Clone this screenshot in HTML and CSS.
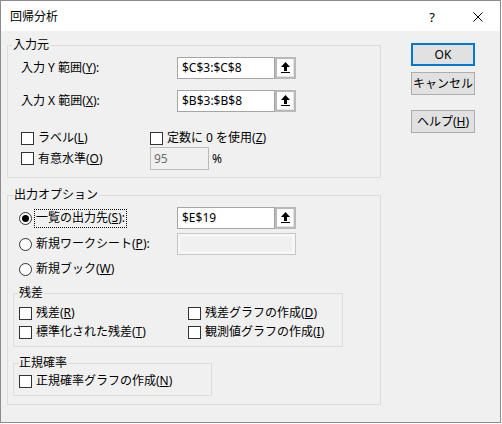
FILE: index.html
```html
<!DOCTYPE html>
<html lang="ja">
<head>
<meta charset="utf-8">
<title>回帰分析</title>
<link rel="stylesheet" href="styles.css">
</head>
<body>
<div class="window">
  <div class="titlebar">
    <span class="title">回帰分析</span>
    <span class="cap cap-help">?</span>
    <span class="cap cap-close"><svg width="10" height="10" viewBox="0 0 10 10"><path d="M0.5 0.5 L9.5 9.5 M9.5 0.5 L0.5 9.5" stroke="#000" stroke-width="1" fill="none"/></svg></span>
  </div>
  <div class="content">
    <div class="main">
      <fieldset class="grp grp-in">
        <legend>入力元</legend>
        <div class="range-row">
          <span class="lbl">入力 Y 範囲(<u>Y</u>):</span>
          <div class="refedit"><span class="ref-text">$C$3:$C$8</span><span class="ref-btn"><svg width="9" height="11" viewBox="0 0 9 11"><path d="M4.5 0 L9 5 L6 5 L6 9 L3 9 L3 5 L0 5 Z" fill="#000"/><rect x="0" y="10" width="9" height="1" fill="#000"/></svg></span></div>
        </div>
        <div class="range-row row-next">
          <span class="lbl">入力 X 範囲(<u>X</u>):</span>
          <div class="refedit"><span class="ref-text">$B$3:$B$8</span><span class="ref-btn"><svg width="9" height="11" viewBox="0 0 9 11"><path d="M4.5 0 L9 5 L6 5 L6 9 L3 9 L3 5 L0 5 Z" fill="#000"/><rect x="0" y="10" width="9" height="1" fill="#000"/></svg></span></div>
        </div>
        <div class="opt-grid">
          <label class="chk"><span class="cb"></span>ラベル(<u>L</u>)</label>
          <label class="chk"><span class="cb"></span>定数に 0 を使用(<u>Z</u>)</label>
          <label class="chk"><span class="cb"></span>有意水準(<u>O</u>)</label>
          <div class="conf"><span class="conf-field">95</span><span class="pct">%</span></div>
        </div>
      </fieldset>

      <fieldset class="grp grp-out">
        <legend>出力オプション</legend>
        <div class="radio-row">
          <label class="rad"><span class="rb"><span class="dot"></span></span><span class="focus">一覧の出力先(<u>S</u>):</span></label>
          <div class="refedit"><span class="ref-text">$E$19</span><span class="ref-btn"><svg width="9" height="11" viewBox="0 0 9 11"><path d="M4.5 0 L9 5 L6 5 L6 9 L3 9 L3 5 L0 5 Z" fill="#000"/><rect x="0" y="10" width="9" height="1" fill="#000"/></svg></span></div>
        </div>
        <div class="radio-row row-gap">
          <label class="rad"><span class="rb"></span>新規ワークシート(<u>P</u>):</label>
          <span class="dis-field"></span>
        </div>
        <div class="radio-row row-gap row-last">
          <label class="rad"><span class="rb"></span>新規ブック(<u>W</u>)</label>
        </div>

        <fieldset class="sub sub-resid">
          <legend>残差</legend>
          <div class="resid-grid">
            <label class="chk"><span class="cb"></span>残差(<u>R</u>)</label>
            <label class="chk"><span class="cb"></span>残差グラフの作成(<u>D</u>)</label>
            <label class="chk"><span class="cb"></span>標準化された残差(<u>T</u>)</label>
            <label class="chk"><span class="cb"></span>観測値グラフの作成(<u>I</u>)</label>
          </div>
        </fieldset>

        <fieldset class="sub sub-norm">
          <legend>正規確率</legend>
          <label class="chk norm-row"><span class="cb"></span>正規確率グラフの作成(<u>N</u>)</label>
        </fieldset>
      </fieldset>
    </div>

    <div class="buttons">
      <span class="btn btn-default">OK</span>
      <span class="btn btn-cancel">キャンセル</span>
      <span class="btn btn-help">ヘルプ(<u>H</u>)</span>
    </div>
  </div>
</div>
</body>
</html>
```

FILE: styles.css
```css
* {
  box-sizing: border-box;
}

html, body {
  margin: 0;
  padding: 0;
  background: #ffffff;
}

body {
  font-family: "Noto Sans", "Noto Sans CJK JP", sans-serif;
  font-size: 12px;
  color: #000;
}

.window {
  width: 501px;
  height: 423px;
  border: 1px solid #8c8c8c;
  background: #f0f0f0;
  display: flex;
  flex-direction: column;
}

.titlebar {
  height: 30px;
  background: #ffffff;
  display: flex;
  align-items: center;
  padding-left: 9px;
  padding-top: 1px;
}

.title {
  flex: 1;
  line-height: 16px;
}

.cap {
  display: flex;
  align-items: center;
  justify-content: center;
  height: 29px;
}

.cap-help {
  width: 46px;
  font-size: 13px;
}

.cap-close {
  width: 45px;
}

.cap-close svg {
  display: block;
}

.content {
  flex: 1;
  display: flex;
  padding: 6px 0 0 6px;
}

.main {
  width: 374px;
  display: flex;
  flex-direction: column;
}

fieldset {
  margin: 0;
  min-width: 0;
  border: 1px solid #dcdcdc;
}

legend {
  padding: 0 1px;
  line-height: 16px;
}

.grp-in {
  padding: 0 0 7px 4px;
}

.grp-out {
  margin-top: 9px;
  padding: 0 0 8px 5px;
}

.lbl, .chk, .rad {
  line-height: 16px;
  white-space: nowrap;
}

.range-row {
  display: grid;
  grid-template-columns: 156px 119px;
  align-items: center;
  margin-top: 4px;
  margin-left: 9px;
  height: 22px;
}

.range-row.row-next {
  margin-top: 11px;
}

.refedit {
  display: flex;
  height: 22px;
}

.ref-text {
  width: 98px;
  height: 22px;
  border: 1px solid #a5a5a5;
  background: #ffffff;
  padding-left: 4px;
  line-height: 20px;
}

.ref-btn {
  width: 21px;
  height: 22px;
  border: 2px solid #b9b9b9;
  background: #fdfdfd;
  box-shadow: inset -1px -1px 0 #e3e3e3;
  display: flex;
  align-items: center;
  justify-content: center;
  padding-bottom: 2px;
}

.ref-btn svg {
  display: block;
}

.opt-grid {
  display: grid;
  grid-template-columns: 129px auto;
  grid-template-rows: 16px 23px;
  row-gap: 1px;
  align-items: center;
  margin-top: 18px;
  margin-left: 9px;
}

.chk, .rad {
  display: flex;
  align-items: center;
}

.cb {
  width: 13px;
  height: 13px;
  border: 1px solid #333333;
  background: #ffffff;
  margin-right: 4px;
  flex: none;
}

.rb {
  width: 13px;
  height: 13px;
  border: 1px solid #333333;
  border-radius: 50%;
  background: #ffffff;
  margin-right: 4px;
  flex: none;
  display: flex;
  align-items: center;
  justify-content: center;
}

.dot {
  width: 7px;
  height: 7px;
  border-radius: 50%;
  background: #000;
}

.conf {
  display: flex;
  align-items: center;
}

.conf-field {
  width: 59px;
  height: 23px;
  border: 1px solid #bcbcbc;
  background: #f0f0f0;
  color: #6d6d6d;
  padding-left: 3px;
  line-height: 21px;
}

.pct {
  margin-left: 3px;
  line-height: 16px;
}

.radio-row {
  display: grid;
  grid-template-columns: 158px 119px;
  align-items: center;
  margin-top: 4px;
  margin-left: 6px;
  height: 22px;
}

.radio-row.row-last {
  height: 20px;
}

.focus {
  border: 1px dotted #000;
  padding: 0 1px 1px 1px;
  margin-left: -2px;
  line-height: 16px;
}

.dis-field {
  width: 119px;
  height: 22px;
  border: 1px solid #c6c6c6;
  background: #f0f0f0;
  box-shadow: inset 0 0 0 3px #f6f6f6;
}

.sub {
  padding: 0 0 6px 4px;
}

.sub-resid {
  width: 330px;
  margin-top: 6px;
}

.sub-norm {
  width: 199px;
  margin-top: 8px;
}

.resid-grid {
  display: grid;
  grid-template-columns: 169px auto;
  grid-template-rows: 16px 16px;
  row-gap: 3px;
  align-items: center;
  margin-top: 4px;
  margin-left: 1px;
}

.norm-row {
  margin-top: 2px;
  margin-left: 1px;
  height: 16px;
}

.buttons {
  margin-left: 30px;
  padding-top: 6px;
  display: flex;
  flex-direction: column;
  width: 64px;
}

.btn {
  height: 23px;
  border: 1px solid #adadad;
  background: #e1e1e1;
  display: flex;
  align-items: center;
  justify-content: center;
  line-height: 16px;
  white-space: nowrap;
}

.btn-default {
  border: 2px solid #0078d7;
}

.btn-cancel {
  margin-top: 6px;
}

.btn-help {
  margin-top: 15px;
}
```
